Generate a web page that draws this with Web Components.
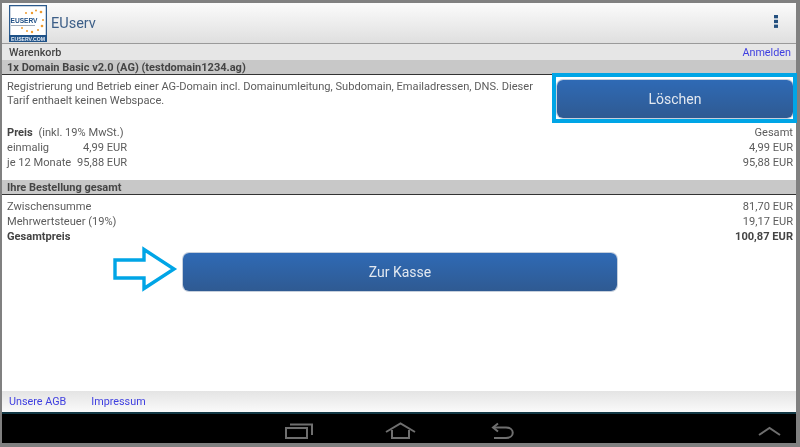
<!DOCTYPE html>
<html lang="de"><head><meta charset="utf-8"><title>EUserv</title>
<style>html,body{margin:0;padding:0;background:#808080}</style></head>
<body>
<tablet-frame>
  <app-bar title="EUserv"></app-bar>
  <sub-bar><span>Warenkorb</span><a-link slot="end">Anmelden</a-link></sub-bar>
  <section-bar>1x Domain Basic v2.0 (AG) (testdomain1234.ag)</section-bar>
  <domain-item></domain-item>
  <section-bar>Ihre Bestellung gesamt</section-bar>
  <order-total></order-total>
  <foot-bar><a-link>Unsere AGB</a-link><a-link>Impressum</a-link></foot-bar>
  <nav-bar></nav-bar>
</tablet-frame>
<script>
function def(name, html){
  customElements.define(name, class extends HTMLElement{
    constructor(){super();this.attachShadow({mode:'open'}).innerHTML=html;}
  });
}
def('tablet-frame',`<style>:host{display:flex;flex-direction:column;box-sizing:border-box;width:800px;height:447px;padding:3px 4px 4px 2px;background:#808080;font:11.1px/13px Roboto,"Liberation Sans",sans-serif;color:#5c5c5c;overflow:hidden;filter:blur(.3px)}</style><slot></slot>`);
def('a-link',`<style>:host{display:inline-block;color:#3f3fe0;font-size:10.8px;white-space:nowrap}</style><slot></slot>`);
def('app-bar',`<style>:host{display:flex;align-items:center;height:40px;flex:none;background:linear-gradient(#fbfbfb,#dfdfdf);border-bottom:1px solid #9a9a9a;position:relative}
.logo{width:38px;height:37px;margin-left:7px;flex:none;display:block}
.t{margin-left:4px;font-size:14.5px;color:#3d5f88}
svg.m{position:absolute;right:18px;top:12px}</style>
<svg class="logo" viewBox="0 0 38 37"><rect x=".6" y=".6" width="36.800" height="35.800" fill="#fff" stroke="#2c5a8c" stroke-width="1.300"/><rect x="0" y="30" width="38" height="7" fill="#1f5288"/>
<g fill="#ee9a2e"><circle cx="23" cy="8" r="1.2"/><circle cx="27" cy="5.500" r="1"/><circle cx="32" cy="7" r="1.300"/><circle cx="17" cy="8" r="1"/><circle cx="34" cy="15" r="1"/><circle cx="33" cy="21" r="1.300"/><circle cx="29" cy="25" r="1"/><circle cx="23" cy="27" r="1.200"/><circle cx="18" cy="26" r="1"/><circle cx="13" cy="23" r="1"/></g>
<text x="1.500" y="18" font-family="Liberation Sans, sans-serif" font-size="8" font-weight="700" fill="#1f4f86" textLength="27" lengthAdjust="spacingAndGlyphs">EUSERV</text>
<rect x="2" y="20" width="24" height="1" fill="#9aa7b8"/>
<text x="2" y="35.500" font-family="Liberation Sans, sans-serif" font-size="4.800" font-weight="700" fill="#e8eef6" textLength="34" lengthAdjust="spacingAndGlyphs">EUSERV.COM</text></svg>
<span class="t">EUserv</span>
<svg class="m" width="4" height="13" viewBox="0 0 4 13"><g fill="#24507f"><rect width="4" height="3.300" y="0"/><rect width="4" height="3.300" y="4.800"/><rect width="4" height="3.300" y="9.600"/></g></svg>`);
def('sub-bar',`<style>:host{display:flex;justify-content:space-between;align-items:center;height:16px;flex:none;padding:0 5px 0 7px;background:#e6e6e6;color:#444;font-weight:500;font-size:10.800px}
::slotted(a-link){font-weight:400}</style><slot></slot><slot name="end"></slot>`);
def('section-bar',`<style>:host{display:flex;align-items:center;height:14px;flex:none;padding-left:5px;background:#c8c8c8;border-bottom:1px solid #333;color:#444;font-weight:700;font-size:11px;white-space:nowrap}</style><slot></slot>`);
def('blue-button',`<style>:host{display:flex;align-items:center;justify-content:center;box-sizing:border-box;background:linear-gradient(#2f6ab5,#2f5a92);border-radius:6px;color:#e2e8f0;font-size:14px;box-shadow:0 0 0 1px #c5cfdc}</style><slot></slot>`);
def('price-row',`<style>:host{display:flex;justify-content:space-between;height:15px;line-height:15px;white-space:nowrap}</style><slot></slot><slot name="end"></slot>`);
def('domain-item',`<style>:host{display:block;flex:none;height:105px;box-sizing:border-box;background:#fff;padding:5px 3px 0 5px;position:relative}
.top{display:flex;justify-content:space-between;height:45px}
.d{width:532px;line-height:13.500px}
blue-button{width:236px;height:38px}
.hl{position:absolute;left:550px;top:-2px;width:245px;height:50px;box-sizing:border-box;border:4px solid #00a5e6;pointer-events:none}
.l{display:flex}.a{width:70px}.b{width:50px;text-align:right}
b{color:#444}.inkl{margin-left:3px}</style>
<div class="top"><div class="d">Registrierung und Betrieb einer AG-Domain incl. Domainumleitung, Subdomain, Emailadressen, DNS. Dieser Tarif enthaelt keinen Webspace.</div><blue-button>Löschen</blue-button></div>
<div class="hl"></div>
<price-row><span><b>Preis</b><span class="inkl"> (inkl. 19% MwSt.)</span></span><span slot="end">Gesamt</span></price-row>
<price-row><span class="l"><span class="a">einmalig</span><span class="b">4,99 EUR</span></span><span slot="end">4,99 EUR</span></price-row>
<price-row><span class="l"><span class="a">je 12 Monate</span><span class="b">95,88 EUR</span></span><span slot="end">95,88 EUR</span></price-row>`);
def('order-total',`<style>:host{display:block;flex:1;background:#fff;padding:4px 3px 0 5px;position:relative}
b{color:#444}
blue-button{width:434px;height:38px;margin:0 0 0 176px}
.row{display:flex;margin-top:9px}
svg{position:absolute;left:110px;top:51px}</style>
<price-row><span>Zwischensumme</span><span slot="end">81,70 EUR</span></price-row>
<price-row><span>Mehrwertsteuer (19%)</span><span slot="end">19,17 EUR</span></price-row>
<price-row><b>Gesamtpreis</b><b slot="end">100,87 EUR</b></price-row>
<div class="row"><blue-button>Zur Kasse</blue-button></div>
<svg width="66" height="46" viewBox="0 0 66 46"><path d="M3 14H32V3.500L62 23 32 42.500V32H3Z" fill="#fff" stroke="#00a5e6" stroke-width="3.400"/></svg>`);
def('foot-bar',`<style>:host{display:flex;align-items:center;gap:25px;height:21px;flex:none;padding:0 0 0 7px;background:linear-gradient(#e4e4e4,#fafafa);border-bottom:2px solid #123845}</style><slot></slot>`);
def('nav-bar',`<style>:host{display:block;height:29px;flex:none;background:#000;position:relative}
svg{position:absolute;fill:none;stroke:#6f6f6f;stroke-width:2}</style>
<svg style="left:283px;top:8px" width="30" height="18" viewBox="0 0 30 18"><path d="M1 6H22V16H1Z"/><path d="M5 2.500H27V13"/></svg>
<svg style="left:383px;top:8px" width="32" height="18" viewBox="0 0 32 18"><path d="M1 10 15.500 1.500 30 10"/><path d="M7 8V16H24V8"/></svg>
<svg style="left:488px;top:8px" width="26" height="18" viewBox="0 0 26 18"><path d="M3 5.500H16C25 5.500 25 16 16 16H4"/><path d="M8 1.500 3 5.500 8 9.500"/></svg>
<svg style="left:756px;top:12px" width="24" height="11" viewBox="0 0 24 11"><path d="M1 9 11.500 2 22 9"/></svg>`);
</script>
</body></html>
